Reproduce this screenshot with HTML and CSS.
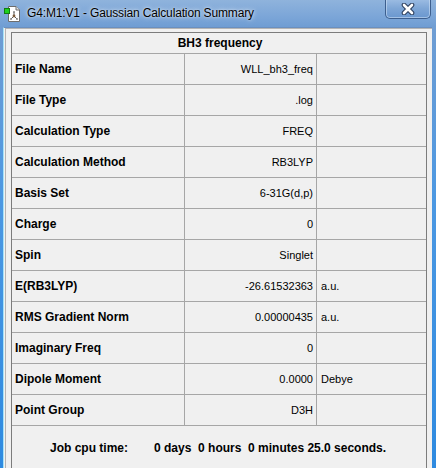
FILE: index.html
```html
<!DOCTYPE html>
<html lang="en">
<head>
<meta charset="utf-8">
<title>G4:M1:V1 - Gaussian Calculation Summary</title>
<link rel="stylesheet" href="styles.css">
</head>
<body>
<div class="window">
  <div class="titlebar">
    <svg class="app-icon" width="17" height="17" viewBox="0 0 17 17">
      <path d="M4.5 1.5 H12 L15.5 5 V16.5 H4.5 Z" fill="#fff" stroke="#6d6d6d"/>
      <path d="M12 1.5 V5 H15.5" fill="#e6e6e6" stroke="#6d6d6d"/>
      <g stroke="#5a5a5a" stroke-width="1">
        <line x1="10" y1="7" x2="10" y2="11"/>
        <line x1="10" y1="11" x2="7" y2="14"/>
        <line x1="10" y1="11" x2="13" y2="14"/>
      </g>
      <circle cx="10" cy="11" r="1.4" fill="#7a5a3a"/>
      <circle cx="10" cy="7" r="1" fill="#888"/>
      <circle cx="7" cy="14" r="1" fill="#888"/>
      <circle cx="13" cy="14" r="1" fill="#888"/>
      <rect x="0.5" y="3.5" width="5" height="5" fill="#1fd11f" stroke="#137a13"/>
    </svg>
    <span class="title">G4:M1:V1 - Gaussian Calculation Summary</span>
    <button class="close" type="button" aria-label="Close">
      <svg width="14" height="12" viewBox="0 0 14 12">
        <path d="M3 2 L11 10 M11 2 L3 10" stroke="#2c3e5c" stroke-width="4.6" stroke-linecap="round"/>
        <path d="M3 2 L11 10 M11 2 L3 10" stroke="#fff" stroke-width="2.6" stroke-linecap="round"/>
      </svg>
    </button>
  </div>
  <div class="client">
    <div class="panel">
      <div class="grid">
        <div class="cell head">BH3 frequency</div>

        <div class="cell label">File Name</div>
        <div class="cell value">WLL_bh3_freq</div>
        <div class="cell unit"></div>

        <div class="cell label">File Type</div>
        <div class="cell value">.log</div>
        <div class="cell unit"></div>

        <div class="cell label">Calculation Type</div>
        <div class="cell value">FREQ</div>
        <div class="cell unit"></div>

        <div class="cell label">Calculation Method</div>
        <div class="cell value">RB3LYP</div>
        <div class="cell unit"></div>

        <div class="cell label">Basis Set</div>
        <div class="cell value">6-31G(d,p)</div>
        <div class="cell unit"></div>

        <div class="cell label">Charge</div>
        <div class="cell value">0</div>
        <div class="cell unit"></div>

        <div class="cell label">Spin</div>
        <div class="cell value">Singlet</div>
        <div class="cell unit"></div>

        <div class="cell label">E(RB3LYP)</div>
        <div class="cell value">-26.61532363</div>
        <div class="cell unit">a.u.</div>

        <div class="cell label">RMS Gradient Norm</div>
        <div class="cell value">0.00000435</div>
        <div class="cell unit">a.u.</div>

        <div class="cell label">Imaginary Freq</div>
        <div class="cell value">0</div>
        <div class="cell unit"></div>

        <div class="cell label">Dipole Moment</div>
        <div class="cell value">0.0000</div>
        <div class="cell unit">Debye</div>

        <div class="cell label">Point Group</div>
        <div class="cell value">D3H</div>
        <div class="cell unit"></div>

        <div class="cell cpu">
          <span class="cpu-label">Job cpu time:</span>
          <span class="cpu-time">0 days  0 hours  0 minutes 25.0 seconds.</span>
        </div>
      </div>
    </div>
  </div>
</div>
</body>
</html>
```
FILE: styles.css
```css
html, body {
  margin: 0;
  padding: 0;
  width: 436px;
  height: 468px;
  overflow: hidden;
  background: #3b8fdf;
}

.window {
  width: 436px;
  height: 468px;
  display: flex;
  flex-direction: column;
  background: linear-gradient(180deg, #86acd8 0%, #6f9dd3 30px, #4c98e2 200px, #2e8ae0 100%);
}

/* glass caption */
.titlebar {
  height: 27px;
  flex: none;
  display: flex;
  align-items: flex-start;
  position: relative;
  background: linear-gradient(180deg, #8fb3dc 0%, #7ca6d8 60%, #6f9dd3 100%);
}

.app-icon {
  margin: 5px 0 0 4px;
  flex: none;
}

.title {
  margin: 6px 0 0 6px;
  font-family: "Liberation Sans", Arial, sans-serif;
  font-size: 12px;
  color: #000;
  letter-spacing: -0.15px;
  text-shadow: 0 0 5px rgba(255, 255, 255, 0.85), 0 0 2px rgba(255, 255, 255, 0.6);
}

.close {
  position: absolute;
  top: -1px;
  left: 385px;
  width: 46px;
  height: 20px;
  padding: 0;
  border: 1px solid #3d5f8e;
  border-top: none;
  border-radius: 0 0 5px 5px;
  background: linear-gradient(180deg, #9dbde3 0%, #7ea6d6 50%, #6a97cf 100%);
  box-shadow: inset 0 0 0 1px rgba(210, 228, 248, 0.55);
  display: flex;
  align-items: center;
  justify-content: center;
}

.client {
  flex: 1;
  margin: 0 4px 0 3px;
  border-left: 1px solid #a6e2f8;
  border-top: 1px solid #6a8fbf;
  background: #f0f0f0;
  padding: 0 0 0 1px;
  min-height: 0;
}

.panel {
  height: 100%;
  box-sizing: border-box;
  border-left: 1px solid #b4b4b4;
  border-top: 1px solid #b4b4b4;
  padding: 3px 0 0 5px;
}

.grid {
  width: 416px;
  box-sizing: border-box;
  display: grid;
  grid-template-columns: 172px 131px 109px;
  grid-template-rows: 20px repeat(12, 30px) 44px;
  gap: 1px;
  border: 1px solid #7c7c7c;
  background: #a6a6a6;
  font-family: "Liberation Sans", Arial, sans-serif;
  color: #000;
}

.cell {
  background: #f0f0f0;
  display: flex;
  align-items: center;
  white-space: nowrap;
  overflow: hidden;
}

.head {
  grid-column: 1 / -1;
  justify-content: center;
  font-weight: bold;
  font-size: 12px;
  padding-left: 2px;
}

.label {
  font-weight: bold;
  font-size: 12px;
  padding-left: 3px;
}

.value {
  justify-content: flex-end;
  font-size: 11px;
  padding-right: 3px;
}

.unit {
  font-size: 11px;
  padding-left: 4px;
}

.cpu {
  grid-column: 1 / -1;
  font-weight: bold;
  font-size: 12px;
  padding-left: 38px;
  white-space: pre;
}

.cpu-time {
  margin-left: 26px;
}
```
